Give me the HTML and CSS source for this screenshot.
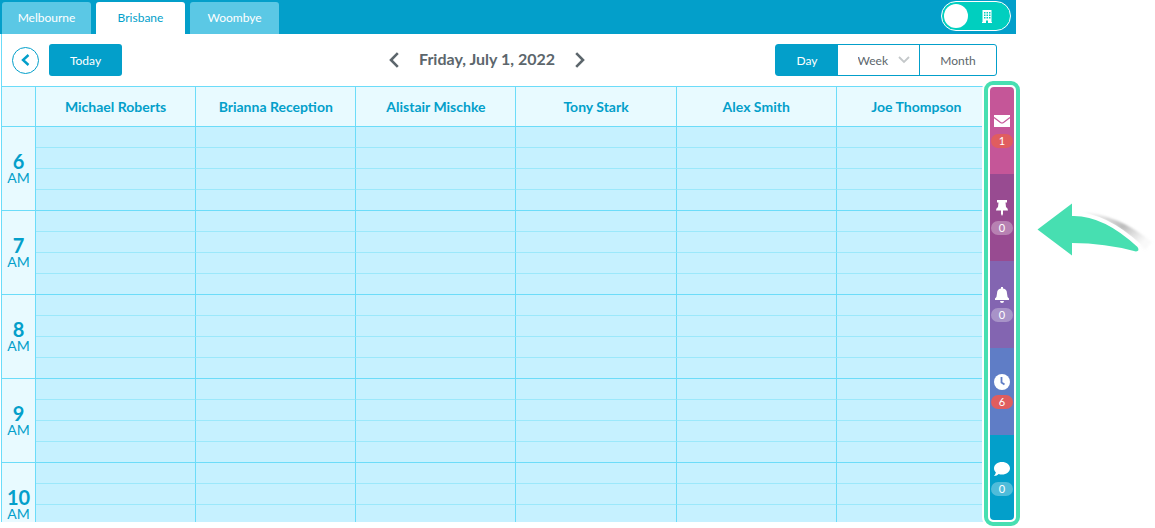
FILE: index.html
```html
<!DOCTYPE html>
<html lang="en">
<head>
    <meta charset="UTF-8">
    <meta name="viewport" content="width=device-width, initial-scale=1.0">
    <title>Calendar</title>
    <link rel="stylesheet" href="styles.css">
</head>
<body>
    <div class="app">
        <header class="topbar">
            <nav class="tabs">
                <a href="#" class="tab">Melbourne</a>
                <a href="#" class="tab active">Brisbane</a>
                <a href="#" class="tab">Woombye</a>
            </nav>
            <label class="toggle">
                <input type="checkbox" aria-label="Location view">
                <svg width="10" height="13" viewBox="0 0 10 13">
                    <path fill="#fff" fill-rule="evenodd" d="M.5 0h9v12h.5v1H6v-2.500H4V13H0v-1h.5zM2 2v1.500h1.500V2zM4.500 2v1.500H6V2zM7 2v1.500h1.500V2zM2 4.500V6h1.500V4.500zM4.500 4.500V6H6V4.500zM7 4.500V6h1.500V4.500zM2 7v1.500h1.500V7zM4.500 7v1.500H6V7zM7 7v1.500h1.500V7z"/>
                </svg>
            </label>
        </header>

        <div class="toolbar">
            <div class="toolbar-left">
                <button type="button" class="back" aria-label="Back">
                    <svg width="9" height="12" viewBox="0 0 9 12"><path d="M7.500 1L2 6l5.500 5" fill="none" stroke="#039fca" stroke-width="2.400"/></svg>
                </button>
                <button type="button" class="today">Today</button>
            </div>
            <div class="date">
                <button type="button" class="arrow" aria-label="Previous day">
                    <svg width="10" height="16" viewBox="0 0 10 16"><path d="M8.800 1.200L2 8l6.800 6.800" fill="none" stroke="#5c666c" stroke-width="2.600"/></svg>
                </button>
                <h1>Friday, July 1, 2022</h1>
                <button type="button" class="arrow" aria-label="Next day">
                    <svg width="10" height="16" viewBox="0 0 10 16"><path d="M1.200 1.200L8 8l-6.800 6.800" fill="none" stroke="#5c666c" stroke-width="2.600"/></svg>
                </button>
            </div>
            <div class="views">
                <button type="button" class="view active">Day</button>
                <div class="view view-week">
                    <select aria-label="Week view">
                        <option>Week</option>
                    </select>
                    <svg width="12" height="8" viewBox="0 0 12 8"><path d="M1 1l5 5 5-5" fill="none" stroke="#c4c8ca" stroke-width="1.800"/></svg>
                </div>
                <button type="button" class="view">Month</button>
            </div>
        </div>

        <div class="board">
            <div class="calendar">
                <table>
                    <thead>
                        <tr>
                            <th class="corner"></th>
                            <th>Michael Roberts</th>
                            <th>Brianna Reception</th>
                            <th>Alistair Mischke</th>
                            <th>Tony Stark</th>
                            <th>Alex Smith</th>
                            <th>Joe Thompson</th>
                        </tr>
                    </thead>
                    <tbody id="hours"></tbody>
                </table>
            </div>
            <nav class="sidebar">
                <a href="#" class="item messages">
                    <svg width="16" height="16" viewBox="0 0 16 16"><path fill="#fff" d="M0 2h16v12H0z"/><path d="M0 4.500l6.500 5q1.500 1 3 0L16 4.500" fill="none" stroke="#c55698" stroke-width="1.200"/></svg>
                    <span class="badge alert">1</span>
                </a>
                <a href="#" class="item pinned">
                    <svg width="16" height="16" viewBox="0 0 16 16"><path fill="#fff" d="M3 0h10v2.500h-1.500L12 7q2 1 2 3.500H9V14l-1 2-1-2v-3.500H2Q2 8 4 7l.5-4.500H3z"/></svg>
                    <span class="badge">0</span>
                </a>
                <a href="#" class="item alerts">
                    <svg width="16" height="16" viewBox="0 0 16 16"><path fill="#fff" d="M7 0h2v1.500q4 .7 4 5 0 3.500 2 5V13H1v-1.500q2-1.500 2-5 0-4.300 4-5zM6 14h4q0 2-2 2t-2-2z"/></svg>
                    <span class="badge">0</span>
                </a>
                <a href="#" class="item waiting">
                    <svg width="16" height="16" viewBox="0 0 16 16"><circle cx="8" cy="8" r="8" fill="#fff"/><path d="M7.500 3v5.500l3 2" fill="none" stroke="#5f7dc6" stroke-width="1.800"/></svg>
                    <span class="badge alert">6</span>
                </a>
                <a href="#" class="item chat">
                    <svg width="16" height="16" viewBox="0 0 16 16"><path fill="#fff" d="M8 1c4.400 0 8 2.700 8 6.200s-3.600 6.300-8 6.300c-1.200 0-2.300-.2-3.300-.6Q3 14.800 0 15q1.500-1.600 1.900-3.500C.7 10.300 0 8.900 0 7.200 0 3.700 3.600 1 8 1z"/></svg>
                    <span class="badge">0</span>
                </a>
            </nav>
        </div>
    </div>

    <aside class="pointer">
        <svg width="130" height="80" viewBox="0 0 130 80">
            <defs>
                <linearGradient id="shade" x1="0" y1="0" x2="1" y2="0.600">
                    <stop offset="0" stop-color="#ddd" stop-opacity="0.300"/>
                    <stop offset="0.600" stop-color="#bbb"/>
                    <stop offset="1" stop-color="#ccc" stop-opacity="0.100"/>
                </linearGradient>
                <filter id="soft"><feGaussianBlur stdDeviation="1"/></filter>
            </defs>
            <path d="M56 22Q92 24 127 52L120 60Q92 30 56 22z" fill="url(#shade)" filter="url(#soft)"/>
            <path d="M47 25Q78 23 114 56" fill="none" stroke="#fff" stroke-width="5"/>
            <path d="M12.500 39.500L47 13.500V26Q78 25 112.500 57Q115 61 111 61.500Q80 53 47 53V65.500z" fill="#47dfb1"/>
        </svg>
    </aside>

    <script>
        const hours = ["6", "7", "8", "9", "10"];
        const staffCount = 6;
        const body = document.getElementById("hours");

        hours.forEach(hour => {
            // each hour has four 15 minute slots
            for (let slot = 0; slot < 4; slot++) {
                const row = document.createElement("tr");
                if (slot === 0) {
                    row.className = "hour-start";
                    row.innerHTML = `<th class="hour" rowspan="4"><strong>${hour}</strong>AM</th>`;
                }
                row.innerHTML += "<td></td>".repeat(staffCount);
                body.appendChild(row);
            }
        });
    </script>
</body>
</html>
```

FILE: styles.css
```css
* {
    box-sizing: border-box;
}
body {
    font-family: Lato, sans-serif;
    font-size: 12px;
    background-color: #fff;
    color: #5c666c;
    display: flex;
    height: 100vh;
    margin: 0;
    overflow: hidden;
}
button, select {
    font: inherit;
    color: inherit;
    background: none;
    border: none;
    padding: 0;
    cursor: pointer;
}
a {
    text-decoration: none;
}
svg {
    display: block;
    flex: none;
}
.app {
    flex: 1;
    min-width: 0;
    display: flex;
    flex-direction: column;
}

/* top bar */
.topbar {
    background-color: #039fca;
    height: 34px;
    display: flex;
    justify-content: space-between;
    padding: 1px 5px 0 2px;
}
.tabs {
    display: flex;
    gap: 5px;
    padding-top: 1px;
}
.tab {
    width: 89px;
    line-height: 32px;
    text-align: center;
    color: #fff;
    background-color: #5bc8e5;
    border-radius: 3px 3px 0 0;
}
.tab.active {
    color: #039fca;
    background-color: #fff;
}
.toggle {
    width: 70px;
    height: 30px;
    display: flex;
    align-items: center;
    gap: 14px;
    padding: 0 2px;
    background-color: #00cfbf;
    border: 1px solid #fff;
    border-radius: 15px;
    cursor: pointer;
}
.toggle input {
    appearance: none;
    width: 24px;
    height: 24px;
    margin: 0;
    background-color: #fff;
    border-radius: 50%;
}

/* toolbar */
.toolbar {
    height: 52px;
    display: grid;
    grid-template-columns: 1fr auto 1fr;
    align-items: center;
    padding: 0 19px 0 10px;
    margin-left: 1px;
    border-left: 1px solid #6cdcf9;
}
.toolbar-left {
    display: flex;
    align-items: center;
    gap: 10px;
}
.back {
    width: 27px;
    height: 27px;
    display: flex;
    align-items: center;
    justify-content: center;
    border: 1px solid #039fca;
    border-radius: 50%;
}
.today {
    width: 73px;
    height: 32px;
    color: #fff;
    background-color: #039fca;
    border-radius: 3px;
}
.date {
    display: flex;
    align-items: center;
    gap: 20px;
    margin-right: 35px;
}
.date h1 {
    margin: 0;
    padding-bottom: 2px;
    font-size: 16px;
    line-height: 20px;
}
.views {
    justify-self: end;
    display: flex;
    height: 32px;
    border: 1px solid #039fca;
    border-radius: 3px;
}
.view {
    width: 76px;
}
.view.active {
    width: 62px;
    color: #fff;
    background-color: #039fca;
}
.view-week {
    width: 82px;
    display: flex;
    align-items: center;
    justify-content: center;
    gap: 9px;
    padding-left: 10px;
    border-right: 1px solid #039fca;
}
.view-week select {
    appearance: none;
}

/* calendar */
.board {
    flex: 1;
    min-height: 0;
    display: flex;
}
.calendar {
    flex: 1;
    min-width: 0;
    margin: 0 0 6px 1px;
    overflow: hidden;
}
table {
    width: 100%;
    table-layout: fixed;
    border-collapse: separate;
    border-spacing: 0;
    border-left: 1px solid #6cdcf9;
    color: #039fca;
}
th, td {
    padding: 0;
    border-right: 1px solid #6cdcf9;
}
th {
    background-color: #e8faff;
}
thead th {
    height: 40px;
    font-size: 14px;
    border-top: 1px solid #6cdcf9;
}
.corner {
    width: 34px;
}
td {
    height: 21px;
    background-color: #c6f1ff;
    border-top: 1px solid #9be8fb;
}
.hour-start td, .hour {
    border-top: 1px solid #6cdcf9;
}
.hour {
    font-size: 14px;
    font-weight: 400;
    line-height: 16px;
}
.hour strong {
    display: block;
    font-size: 20px;
    line-height: 18px;
}

/* sidebar */
.sidebar {
    width: 36px;
    margin: -5px -4px 2px -13px;
    display: flex;
    flex-direction: column;
    z-index: 1;
    padding: 2px;
    background-color: #fff;
    border: 4px solid #47dfb1;
    border-radius: 9px;
    box-shadow: 0 0 0 2px #fff;
}
.item {
    height: 87px;
    display: flex;
    flex-direction: column;
    align-items: center;
    gap: 5px;
    padding-top: 26px;
}
.messages {
    background-color: #c55698;
    border-radius: 4px 4px 0 0;
}
.pinned {
    background-color: #984b91;
}
.alerts {
    background-color: #8365b1;
}
.waiting {
    background-color: #5f7dc6;
}
.chat {
    flex: 1;
    background-color: #039fca;
    border-radius: 0 0 4px 4px;
}
.badge {
    width: 22px;
    line-height: 14px;
    font-size: 11px;
    text-align: center;
    color: #fff;
    background-color: rgba(255, 255, 255, 0.3);
    border-radius: 7px;
}
.badge.alert {
    background-color: #e05d5f;
}

.pointer {
    width: 139px;
    padding: 190px 0 0 9px;
}
```
